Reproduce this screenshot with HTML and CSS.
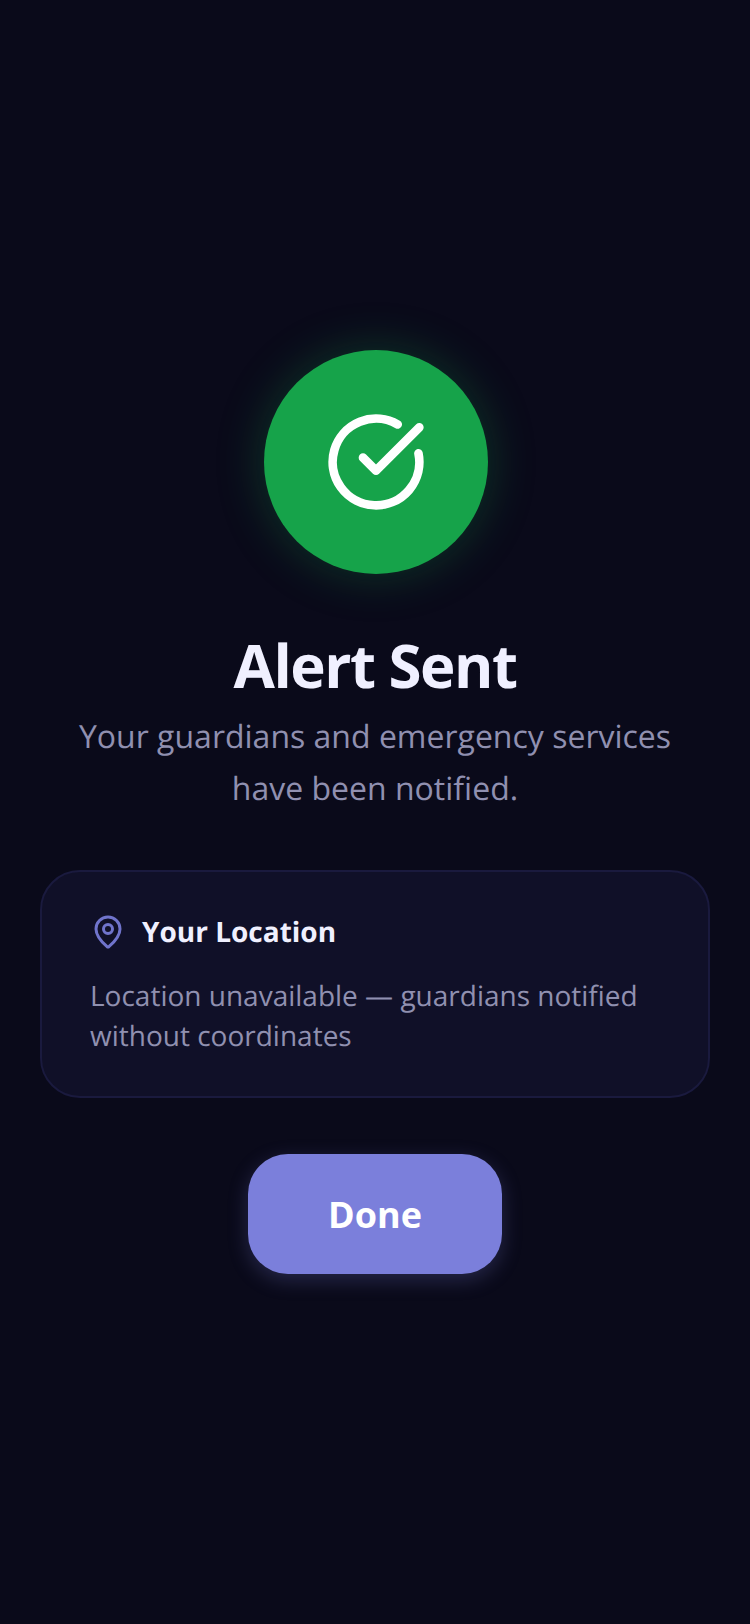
FILE: index.html
```html
<!DOCTYPE html>
<html lang="en">
<head>
<meta charset="utf-8">
<title>Alert Sent</title>
<link rel="stylesheet" href="styles.css">
</head>
<body>
<main class="screen">
  <div class="badge">
    <svg class="badge-icon" viewBox="0 0 24 24" fill="none" stroke="currentColor" stroke-width="2" stroke-linecap="round" stroke-linejoin="round">
      <path d="M21.801 10A10 10 0 1 1 17 3.335"/>
      <path d="m9 11 3 3L22 4"/>
    </svg>
  </div>
  <h1 class="title">Alert Sent</h1>
  <p class="subtitle">Your guardians and emergency services have been notified.</p>
  <section class="card">
    <div class="card-head">
      <svg class="pin" viewBox="0 0 24 24" fill="none" stroke="currentColor" stroke-width="2" stroke-linecap="round" stroke-linejoin="round">
        <path d="M20 10c0 4.993-5.539 10.193-7.399 11.799a1 1 0 0 1-1.202 0C9.539 20.193 4 14.993 4 10a8 8 0 0 1 16 0"/>
        <circle cx="12" cy="10" r="3"/>
      </svg>
      <h2 class="card-title">Your Location</h2>
    </div>
    <p class="card-text">Location unavailable — guardians notified without coordinates</p>
  </section>
  <button class="done" type="button">Done</button>
</main>
</body>
</html>
```
FILE: styles.css
```css
* { box-sizing: border-box; }
html, body { margin: 0; height: 100%; }
body {
  background: #0a0a1a;
  font-family: "Open Sans", sans-serif;
  text-rendering: geometricPrecision;
}
.screen {
  height: 1624px;
  padding: 350px 40px 0;
  display: flex;
  flex-direction: column;
  align-items: center;
}
.badge {
  width: 224px;
  height: 224px;
  margin-left: 2px;
  border-radius: 50%;
  background: #16a34a;
  color: #fff;
  display: flex;
  align-items: center;
  justify-content: center;
  box-shadow: 0 0 48px rgba(22, 163, 74, 0.3);
}
.badge-icon { width: 104px; height: 104px; }
.title {
  margin: 52px 0 0;
  font-size: 60px;
  line-height: 78px;
  font-weight: 700;
  letter-spacing: -1.5px;
  color: #f0f0ff;
}
.subtitle {
  margin: 7px 0 0;
  width: 640px;
  font-size: 32px;
  line-height: 52px;
  text-align: center;
  color: #9090b0;
}
.card {
  margin-top: 55px;
  width: 670px;
  height: 228px;
  padding: 41px 48px;
  background: #101028;
  border: 2px solid #1a1a3e;
  border-radius: 40px;
}
.card-head {
  display: flex;
  align-items: center;
  gap: 16px;
}
.pin { width: 36px; height: 36px; color: #7074cc; flex: none; }
.card-title {
  margin: 0;
  font-size: 28px;
  line-height: 38px;
  font-weight: 700;
  color: #f0f0ff;
}
.card-text {
  margin: 25px 0 0;
  font-size: 28px;
  line-height: 40px;
  color: #9090b0;
}
.done {
  margin-top: 56px;
  width: 254px;
  height: 120px;
  border: 0;
  border-radius: 40px;
  background: #7b7fdb;
  color: #fff;
  font-family: inherit;
  font-size: 36px;
  font-weight: 700;
  box-shadow: 0 6px 20px rgba(123, 127, 219, 0.25);
}
```
